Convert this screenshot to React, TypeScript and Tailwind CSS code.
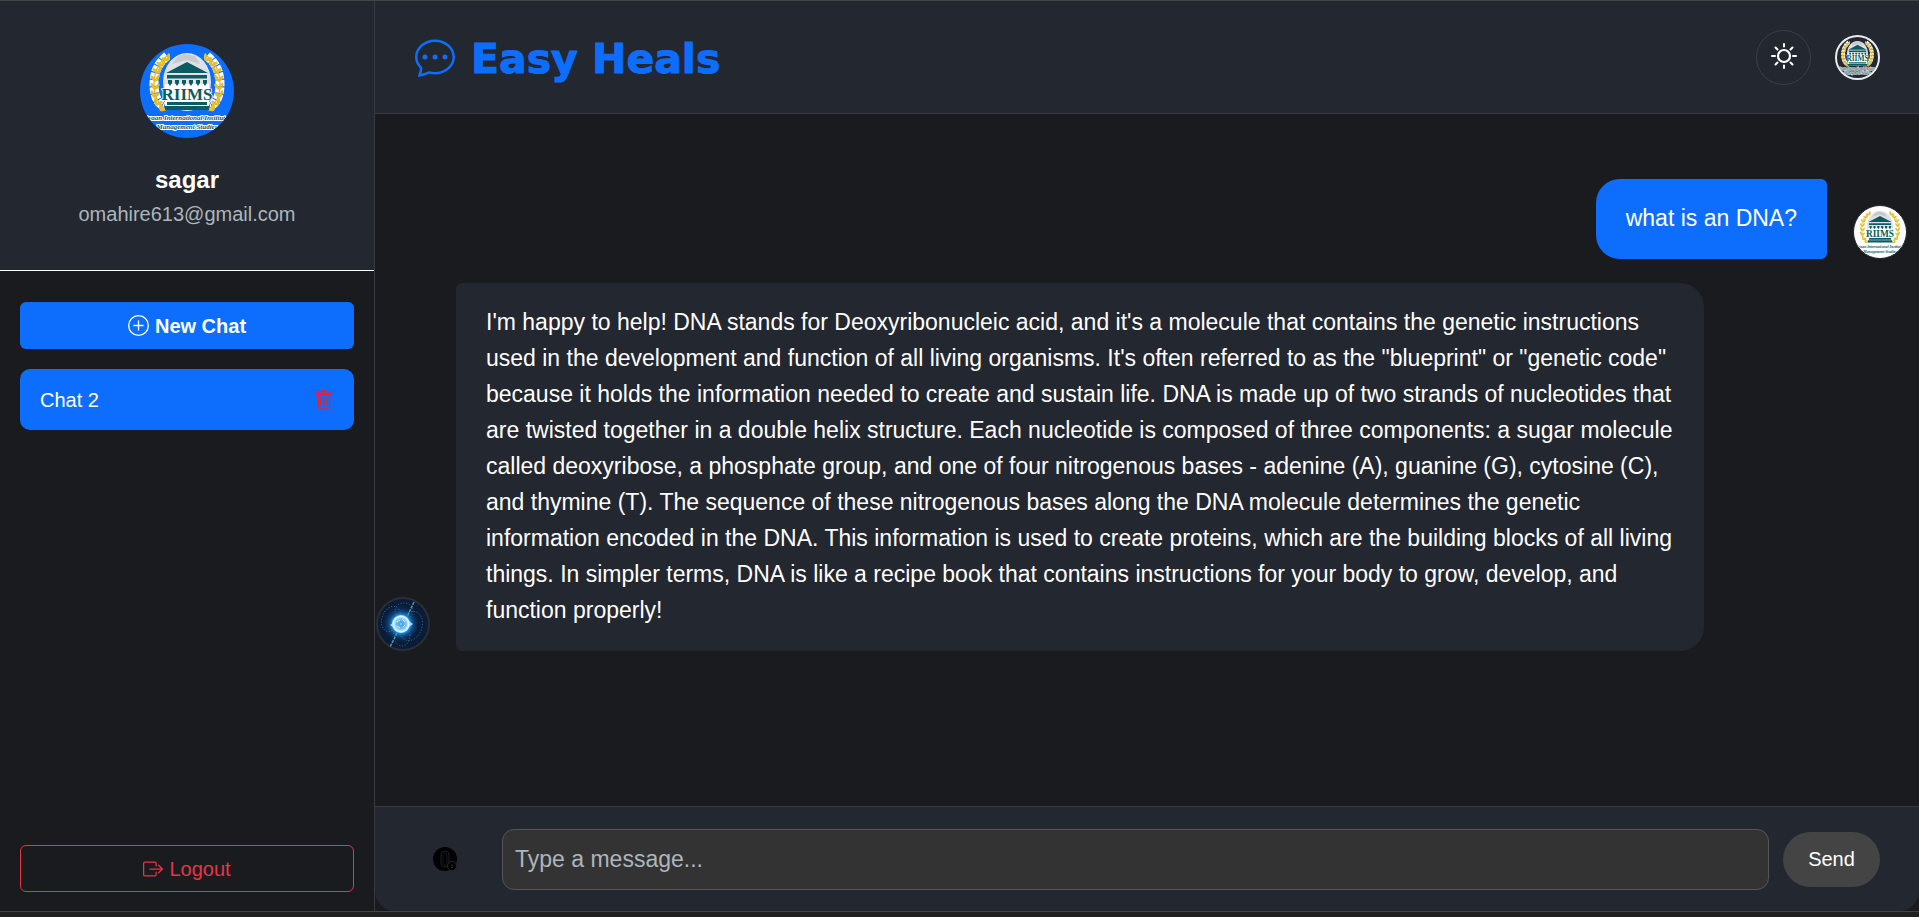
import { useId } from "react";
import { BsBoxArrowRight, BsChatDots, BsPlusCircle, BsTrash } from "react-icons/bs";

const ANSWER =
  "I'm happy to help! DNA stands for Deoxyribonucleic acid, and it's a molecule that contains the genetic instructions used in the development and function of all living organisms. It's often referred to as the \"blueprint\" or \"genetic code\" because it holds the information needed to create and sustain life. DNA is made up of two strands of nucleotides that are twisted together in a double helix structure. Each nucleotide is composed of three components: a sugar molecule called deoxyribose, a phosphate group, and one of four nitrogenous bases - adenine (A), guanine (G), cytosine (C), and thymine (T). The sequence of these nitrogenous bases along the DNA molecule determines the genetic information encoded in the DNA. This information is used to create proteins, which are the building blocks of all living things. In simpler terms, DNA is like a recipe book that contains instructions for your body to grow, develop, and function properly!";

const LEAVES = [
  [26, 13, -35],
  [21, 18, -25],
  [17, 25, -15],
  [15, 33, -5],
  [15, 41, 5],
  [15, 49, 15],
  [18, 57, 25],
  [23, 63, 40],
];

function Laurel() {
  return (
    <g>
      <path d="M27 12C17 20 14 30 14 40C14 52 18 60 25 65" fill="none" stroke="#e3b71c" strokeWidth="1.2" />
      {LEAVES.map(([x, y, r]) => (
        <g key={y} transform={`translate(${x} ${y}) rotate(${r})`} fill="#e6bd2b">
          <ellipse cx="-2.4" cy="0" rx="1.5" ry="3.8" transform="rotate(-35)" />
          <ellipse cx="2.6" cy="0" rx="1.5" ry="3.8" transform="rotate(35)" />
        </g>
      ))}
    </g>
  );
}

function Crest({ className }: { className: string }) {
  const id = useId();
  return (
    <svg viewBox="0 0 94 94" className={className} role="img" aria-label="RIIMS">
      <clipPath id={id}>
        <circle cx="47" cy="47" r="47" />
      </clipPath>
      <g clipPath={`url(#${id})`}>
        <path
          d="M27 12C17 20 14 30 14 40C14 52 18 60 24 62M67 12C77 20 80 30 80 40C80 52 76 60 70 62"
          fill="none"
          stroke="#fff"
          strokeWidth="9"
          strokeDasharray="6 1"
        />
        <ellipse cx="47" cy="38" rx="24" ry="29" fill="#dfe2e5" />
        <path d="M32 20L38 12L45 10L55 12L60 20L47 16Z" fill="#c6cbd0" />
        <Laurel />
        <g transform="translate(94 0) scale(-1 1)">
          <Laurel />
        </g>
        <path d="M25 40H69V66H25Z" fill="#fff" />
        <g fill="#0b5c61">
          <path d="M47 18L68 29H26Z" />
          <path d="M27 31H67V34.5H27Z" />
          <path d="M28 36H32V39L30 42L28 39ZM35 36H39V39L37 42L35 39ZM42 36H46V39L44 42L42 39ZM49 36H53V39L51 42L49 39ZM56 36H60V39L58 42L56 39ZM63 36H67V39L65 42L63 39Z" />
          <path d="M27 58H67V61H27ZM25 62H69V66H25Z" />
        </g>
        <text
          x="47"
          y="56"
          textAnchor="middle"
          fontFamily="Liberation Serif, serif"
          fontWeight="700"
          fontSize="17"
          fill="#0b5c61"
          stroke="#fff"
          strokeWidth="1.5"
          paintOrder="stroke"
        >
          RIIMS
        </text>
        <g
          fontFamily="Liberation Serif, serif"
          fontStyle="italic"
          fontWeight="700"
          fontSize="7"
          fill="#14595f"
          stroke="#fff"
          strokeWidth="2"
          strokeLinejoin="round"
          paintOrder="stroke"
          textAnchor="middle"
        >
          <text x="46" y="76">
            Ryaan International Institute
          </text>
          <text x="47" y="85">
            Management Studies
          </text>
        </g>
      </g>
    </svg>
  );
}

function BotAvatar({ className }: { className: string }) {
  const glow = useId();
  const core = useId();
  return (
    <svg viewBox="0 0 54 54" className={className} role="img" aria-label="Assistant">
      <radialGradient id={glow}>
        <stop offset="0" stopColor="#58b8f8" />
        <stop offset="0.45" stopColor="#2b97ea" />
        <stop offset="0.65" stopColor="#1262ad" stopOpacity="0.6" />
        <stop offset="1" stopColor="#0b2a50" stopOpacity="0" />
      </radialGradient>
      <radialGradient id={core}>
        <stop offset="0" stopColor="#3f93d6" />
        <stop offset="0.6" stopColor="#7cc9f8" />
        <stop offset="0.85" stopColor="#e6fbff" />
        <stop offset="1" stopColor="#8fdcff" />
      </radialGradient>
      <circle cx="27" cy="27" r="26" fill="#0a1c38" stroke="#2b2f35" strokeWidth="2" />
      <circle cx="25" cy="27" r="19" fill={`url(#${glow})`} />
      <g fill="none" stroke="#3b86b3" strokeWidth="0.8" strokeDasharray="1 1.8">
        <ellipse cx="15" cy="22" rx="9" ry="13" transform="rotate(20 15 22)" />
        <ellipse cx="35" cy="29" rx="11" ry="15" transform="rotate(20 35 29)" />
        <ellipse cx="26" cy="38" rx="8" ry="11" />
        <ellipse cx="28" cy="14" rx="9" ry="8" />
      </g>
      <path d="M38 5L31 20M21 36L14 50" stroke="#4e93ad" strokeWidth="1.6" strokeDasharray="3 1" />
      <path d="M14 28L17 26L17 30ZM33 24L37 27L33 30Z" fill="#9fdcfa" />
      <circle cx="25" cy="27" r="9" fill={`url(#${core})`} />
      <path
        d="M21 25L24 23M26 22L29 25M21 29L24 31M27 30L29 28M24 27H26"
        stroke="#c9edff"
        strokeWidth="1"
        fill="none"
      />
    </svg>
  );
}

function SunIcon() {
  return (
    <svg viewBox="0 0 28 28" className="size-7" fill="none" stroke="#fff" strokeLinecap="round" aria-hidden="true">
      <circle cx="14" cy="13" r="6" strokeWidth="2.2" />
      <path
        d="M14 1V3.5M14 22.5V25M2 13H5M23 13H26M5.5 4.5L7.5 6.5M20.5 19.5L22.5 21.5M5.5 21.5L7.5 19.5M20.5 6.5L22.5 4.5"
        strokeWidth="2"
      />
    </svg>
  );
}

function MicIcon() {
  return (
    <svg viewBox="0 0 24 24" className="size-6" aria-hidden="true">
      <circle cx="12" cy="12" r="12" fill="#000" />
      <rect x="8" y="4" width="8" height="16" rx="4" fill="none" stroke="#1d2026" />
      <rect x="10" y="6" width="4" height="12" rx="2" fill="none" stroke="#15171b" />
      <circle cx="19" cy="19" r="4.5" fill="#000" stroke="#23272f" />
      <path d="M19 17V21M18 20L19 21L20 20" stroke="#30343c" fill="none" strokeWidth="0.8" />
    </svg>
  );
}

export default function App() {
  return (
    <div className="flex h-screen flex-col border-t border-[#444444] bg-[#202020] pb-[5px] font-['Liberation_Sans',Arial,sans-serif] text-white">
      <div className="flex min-h-0 flex-1 border-b border-[#444444] bg-[#1a1b1f]">
        <aside className="flex w-[375px] shrink-0 flex-col border-r border-[#373b41]">
          <section className="flex flex-col items-center border-b border-white bg-[#23272f] pt-[43px] pb-[41px]">
            <Crest className="size-[94px] rounded-full bg-[#0d6efd]" />
            <h2 className="mt-[27px] text-2xl leading-[30px] font-bold">sagar</h2>
            <p className="mt-1 text-xl leading-[30px] text-[#adb5bd]">omahire613@gmail.com</p>
          </section>
          <nav className="flex flex-1 flex-col px-5 pt-[31px] pb-[19px]">
            <button className="flex h-[47px] items-center justify-center gap-[6px] rounded-md bg-[#0d6efd] text-xl font-bold">
              <BsPlusCircle className="size-[21px]" />
              New Chat
            </button>
            <div className="mt-5 flex h-[61px] items-center justify-between rounded-[10px] bg-[#0d6efd] px-5">
              <a href="#chat-2" className="text-xl">
                Chat 2
              </a>
              <button aria-label="Delete Chat 2" className="text-[#ee1c2e]">
                <BsTrash className="size-5" />
              </button>
            </div>
            <button className="mt-auto flex h-[47px] items-center justify-center gap-[6px] rounded-md border border-[#e63546] text-xl text-[#e63546]">
              <BsBoxArrowRight className="size-5" />
              Logout
            </button>
          </nav>
        </aside>

        <main className="flex min-w-0 flex-1 flex-col">
          <header className="flex h-[113px] shrink-0 items-center justify-between border-b border-[#373b41] bg-[#23272f] pr-[39px] pl-10">
            <div className="flex items-center gap-4 text-[#0d6efd]">
              <BsChatDots className="size-10" />
              <h1 className="pt-1 font-['DejaVu_Sans',sans-serif] text-[41px] leading-[50px] font-black [-webkit-text-stroke:1px_#0d6efd]">
                Easy Heals
              </h1>
            </div>
            <div className="flex items-center gap-6">
              <button
                aria-label="Switch theme"
                className="flex size-[55px] items-center justify-center rounded-full border border-[#3a3e45]"
              >
                <SunIcon />
              </button>
              <Crest className="size-[45px] rounded-full border-2 border-[#e9ecef]" />
            </div>
          </header>

          <section className="flex flex-1 flex-col gap-6 pt-[65px] pr-3 pl-px">
            <div className="flex items-end justify-end gap-[26px]">
              <p className="rounded-l-3xl rounded-r-md bg-[#0d6efd] px-[30px] pt-[21px] pb-[23px] text-[23px] leading-9">
                what is an DNA?
              </p>
              <Crest className="size-[54px] rounded-full border border-[#23272f] bg-white" />
            </div>
            <div className="flex items-end gap-[26px]">
              <BotAvatar className="size-[54px] shrink-0" />
              <p className="max-w-[1248px] rounded-l-md rounded-r-3xl bg-[#23272f] pt-[21px] pr-5 pb-[23px] pl-[30px] text-[23px] leading-9">
                {ANSWER}
              </p>
            </div>
          </section>

          <form
            onSubmit={(event) => event.preventDefault()}
            className="flex h-[105px] shrink-0 items-center rounded-b-[20px] border-t border-[#373b41] bg-[#23272f] pr-[39px] pl-[58px]"
          >
            <button type="button" aria-label="Record voice message">
              <MicIcon />
            </button>
            <input
              type="text"
              aria-label="Message"
              placeholder="Type a message..."
              className="ml-[45px] h-[61px] min-w-0 flex-1 rounded-xl border border-[#555555] bg-[#333333] px-3 text-[23px] outline-none placeholder:text-[#adb5bd]"
            />
            <button type="submit" className="ml-[14px] h-[55px] w-[97px] rounded-full bg-[#444444] text-xl">
              Send
            </button>
          </form>
        </main>
      </div>
    </div>
  );
}
